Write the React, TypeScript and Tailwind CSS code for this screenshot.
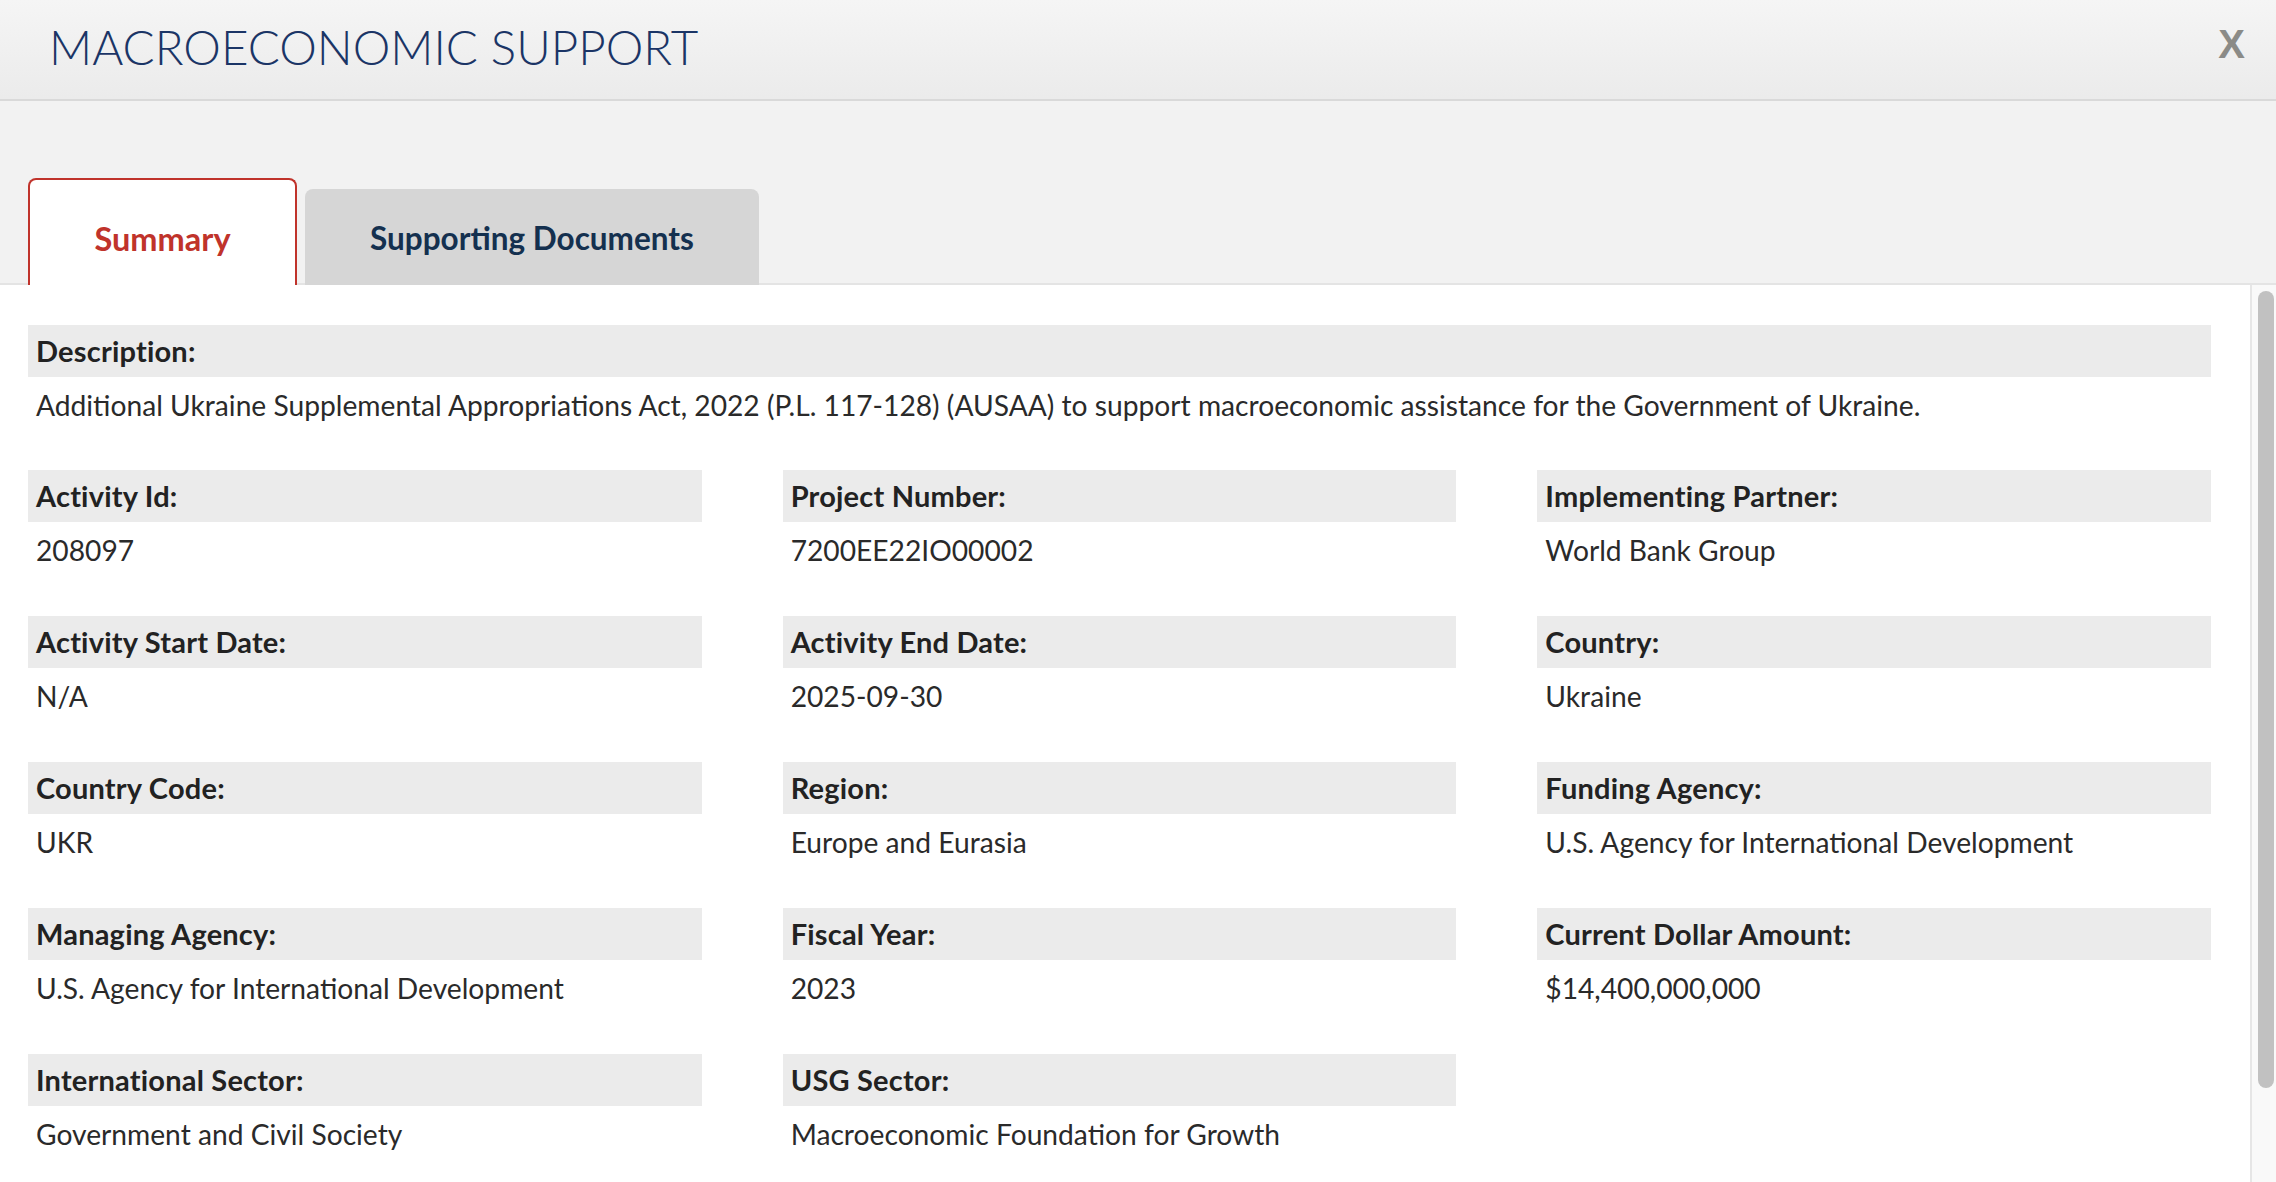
const fields: { label: string; value: string }[] = [
  { label: 'Activity Id:', value: '208097' },
  { label: 'Project Number:', value: '7200EE22IO00002' },
  { label: 'Implementing Partner:', value: 'World Bank Group' },
  { label: 'Activity Start Date:', value: 'N/A' },
  { label: 'Activity End Date:', value: '2025-09-30' },
  { label: 'Country:', value: 'Ukraine' },
  { label: 'Country Code:', value: 'UKR' },
  { label: 'Region:', value: 'Europe and Eurasia' },
  { label: 'Funding Agency:', value: 'U.S. Agency for International Development' },
  { label: 'Managing Agency:', value: 'U.S. Agency for International Development' },
  { label: 'Fiscal Year:', value: '2023' },
  { label: 'Current Dollar Amount:', value: '$14,400,000,000' },
  { label: 'International Sector:', value: 'Government and Civil Society' },
  { label: 'USG Sector:', value: 'Macroeconomic Foundation for Growth' },
];

function Field({ label, value }: { label: string; value: string }) {
  return (
    <div className="mb-[46px]">
      <div className="h-[52px] bg-[#ebebeb] pl-[8px] flex items-center text-[29px] tracking-[0.2px] font-bold text-[#222]">
        {label}
      </div>
      <div className="mt-[8px] pl-[8px] leading-[40px] text-[28.2px] text-[#2a2a2a]">{value}</div>
    </div>
  );
}

export default function App() {
  return (
    <div className="h-[1182px] flex flex-col overflow-hidden bg-white font-['Lato',sans-serif]">
      <div className="h-[101px] shrink-0 flex items-center justify-between border-b-2 border-[#d9d9d9] bg-gradient-to-b from-[#f5f5f5] to-[#ebebeb] pl-[49px] pr-[31px]">
        <h1 className="text-[47.5px] font-light text-[#1b3566] leading-none pb-[6px]">
          MACROECONOMIC SUPPORT
        </h1>
        <button className="text-[40px] font-bold text-[#8b8b87] font-['Liberation_Sans',sans-serif] leading-none pb-[12px]">
          X
        </button>
      </div>

      <div className="h-[184px] shrink-0 bg-[#f2f2f2] border-b-2 border-[#e4e4e4] flex items-end gap-[8px] pl-[28px]">
        <div className="relative -mb-[2px] h-[107px] w-[269px] bg-white border-2 border-b-0 border-[#c0332b] rounded-t-[8px] flex items-center justify-center pt-[14px]">
          <span className="text-[32.5px] font-bold text-[#c0332b]">Summary</span>
        </div>
        <div className="relative -mb-[2px] h-[96px] w-[454px] bg-[#d6d6d6] rounded-t-[8px] flex items-center justify-center pt-[4px]">
          <span className="text-[31.5px] font-bold text-[#14304f]">Supporting Documents</span>
        </div>
      </div>

      <div className="flex-1 flex min-h-0">
        <div className="flex-1 overflow-hidden pt-[40px] pl-[28px] pr-[39px]">
          <div className="mb-[-1px]">
            <Field
              label="Description:"
              value="Additional Ukraine Supplemental Appropriations Act, 2022 (P.L. 117-128) (AUSAA) to support macroeconomic assistance for the Government of Ukraine."
            />
          </div>
          <div className="grid grid-cols-3 gap-x-[81px]">
            {fields.map((f) => (
              <Field key={f.label} label={f.label} value={f.value} />
            ))}
          </div>
        </div>
        <div className="w-[26px] shrink-0 border-l-2 border-[#e6e6e6] bg-[#f9f9f9] pt-[6px] pl-[6px]">
          <div className="w-[16px] h-[797px] rounded-full bg-[#c1c1c1]"></div>
        </div>
      </div>
    </div>
  );
}
